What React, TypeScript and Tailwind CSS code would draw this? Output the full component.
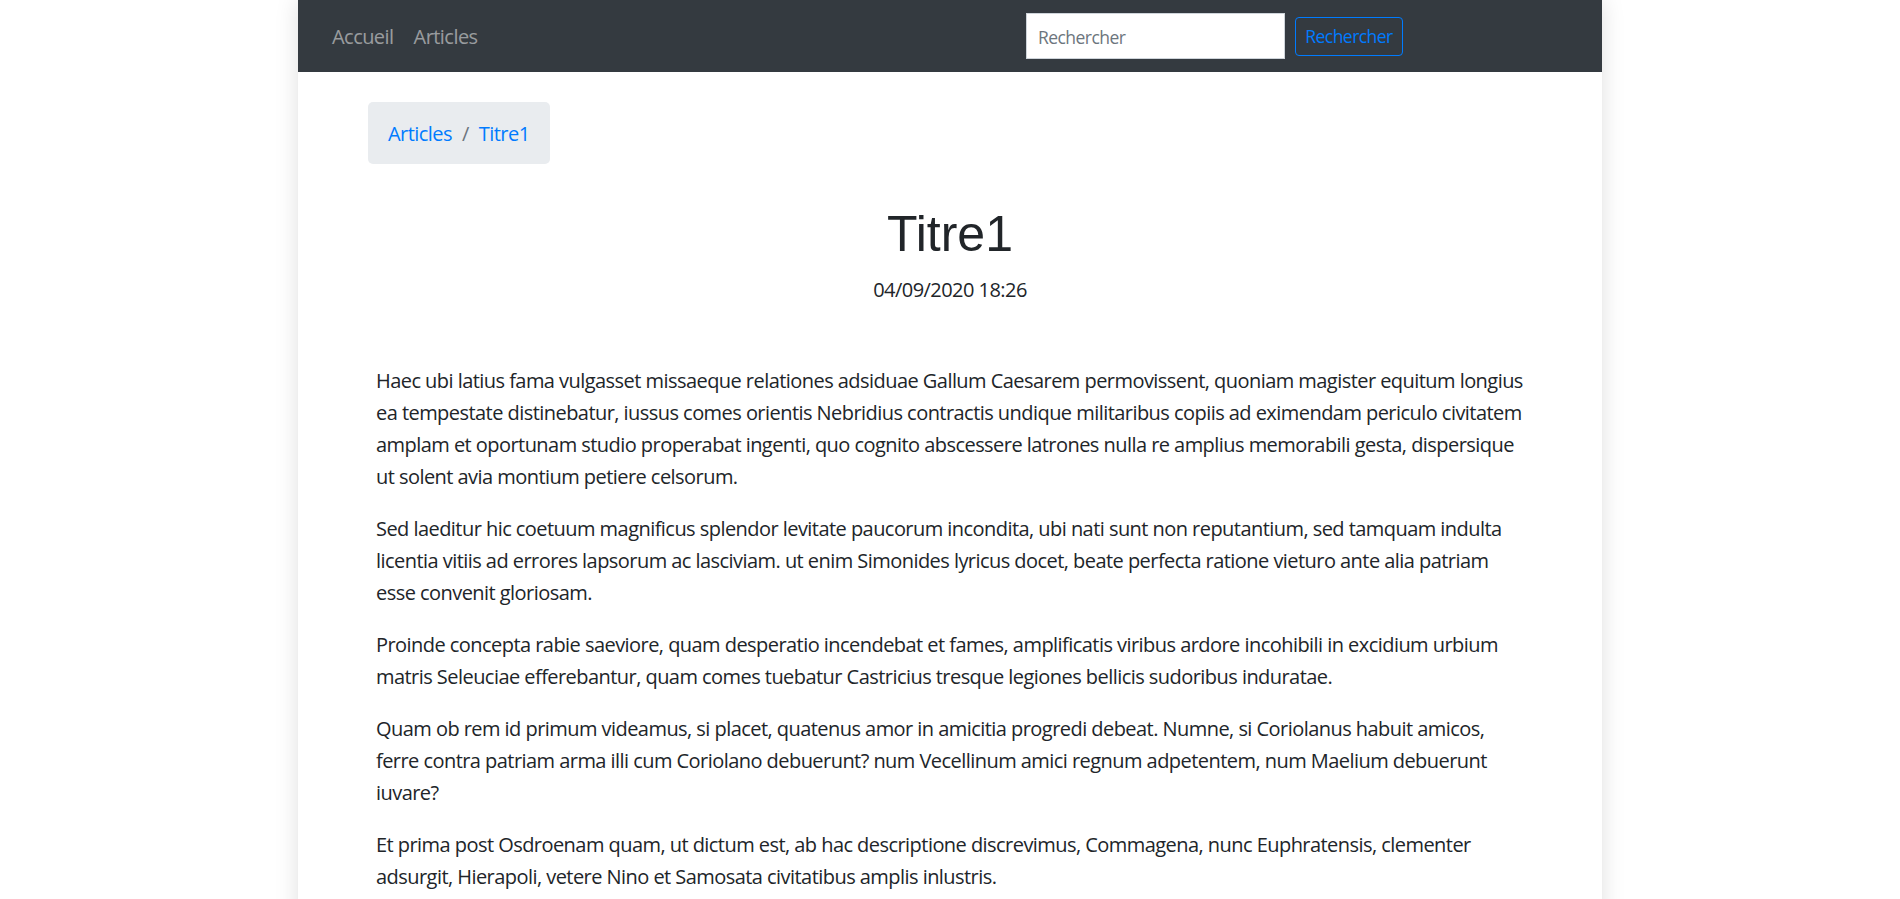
import React from "react";

const paragraphs = [
  "Haec ubi latius fama vulgasset missaeque relationes adsiduae Gallum Caesarem permovissent, quoniam magister equitum longius ea tempestate distinebatur, iussus comes orientis Nebridius contractis undique militaribus copiis ad eximendam periculo civitatem amplam et oportunam studio properabat ingenti, quo cognito abscessere latrones nulla re amplius memorabili gesta, dispersique ut solent avia montium petiere celsorum.",
  "Sed laeditur hic coetuum magnificus splendor levitate paucorum incondita, ubi nati sunt non reputantium, sed tamquam indulta licentia vitiis ad errores lapsorum ac lasciviam. ut enim Simonides lyricus docet, beate perfecta ratione vieturo ante alia patriam esse convenit gloriosam.",
  "Proinde concepta rabie saeviore, quam desperatio incendebat et fames, amplificatis viribus ardore incohibili in excidium urbium matris Seleuciae efferebantur, quam comes tuebatur Castricius tresque legiones bellicis sudoribus induratae.",
  "Quam ob rem id primum videamus, si placet, quatenus amor in amicitia progredi debeat. Numne, si Coriolanus habuit amicos, ferre contra patriam arma illi cum Coriolano debuerunt? num Vecellinum amici regnum adpetentem, num Maelium debuerunt iuvare?",
  "Et prima post Osdroenam quam, ut dictum est, ab hac descriptione discrevimus, Commagena, nunc Euphratensis, clementer adsurgit, Hierapoli, vetere Nino et Samosata civitatibus amplis inlustris.",
];

export default function App() {
  return (
    <div className="min-h-screen bg-white font-['Open_Sans','Noto_Sans',sans-serif] text-[20px] tracking-[-0.55px] text-[#212529]">
      <div className="mx-auto min-h-screen w-[1304px] bg-white pb-10 shadow-[0_0_22px_rgba(0,0,0,0.13)]">
        <nav className="flex h-[72px] items-center bg-[#343a40] pl-[24px] pr-[199px]">
          <a href="#" className="px-[10px] pt-[2px] leading-[30px] text-white/50">
            Accueil
          </a>
          <a href="#" className="px-[10px] pt-[2px] leading-[30px] text-white/50">
            Articles
          </a>
          <form className="ml-auto flex items-center gap-[10px]" onSubmit={(e) => e.preventDefault()}>
            <input
              type="search"
              placeholder="Rechercher"
              className="h-[46px] w-[259px] border border-[#ced4da] bg-white px-[11px] pt-[2px] text-[17.5px] text-[#495057] outline-none placeholder:text-[#6c757d]"
            />
            <button
              type="submit"
              className="h-[39px] w-[108px] rounded-[4px] border border-[#007bff] text-[17.5px] text-[#007bff]"
            >
              Rechercher
            </button>
          </form>
        </nav>

        <main className="px-[70px] pt-[30px]">
          <ol className="inline-flex h-[62px] items-center rounded-[5px] bg-[#e9ecef] px-[20px] pt-[2px] leading-[30px]">
            <li>
              <a href="#" className="text-[#007bff]">
                Articles
              </a>
            </li>
            <li className="flex pl-[10px]">
              <span className="pr-[10px] text-[#6c757d]">/</span>
              <a href="#" className="text-[#007bff]">
                Titre1
              </a>
            </li>
          </ol>

          <h1 className="mt-[40px] text-center font-['Liberation_Sans',Arial,sans-serif] text-[50px] leading-[60px] tracking-normal text-[#212529]">
            Titre1
          </h1>
          <p className="mt-[9.5px] text-center leading-[32px]">04/09/2020 18:26</p>

          <div className="mt-[59px] w-[1160px] pl-[8px] leading-[32px]">
            {paragraphs.map((p, i) => (
              <p key={i} className="mb-[20px]">
                {p}
              </p>
            ))}
          </div>
        </main>
      </div>
    </div>
  );
}
